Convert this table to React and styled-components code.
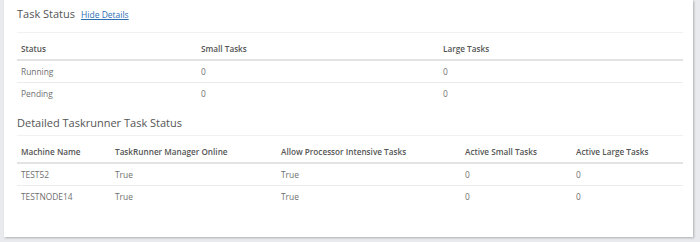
import React from "react";
import styled, { createGlobalStyle } from "styled-components";

const GlobalStyle = createGlobalStyle`
  html, body {
    margin: 0;
    padding: 0;
    background: #e8eaed;
    font-family: "Open Sans", "Noto Sans", Arial, sans-serif;
  }
`;

const Page = styled.div`
  width: 700px;
  height: 242px;
  padding: 0 7px 0 4px;
  box-sizing: border-box;
  overflow: hidden;
`;

const Card = styled.section`
  background: #fff;
  height: 237px;
  box-sizing: border-box;
  padding: 6px 10px 0 13px;
  box-shadow: 1px 1px 2px rgba(0, 0, 0, 0.25);
`;

const TitleRow = styled.div`
  display: flex;
  align-items: baseline;
  gap: 6px;
  height: 26px;
`;

const Title = styled.h2`
  margin: 0;
  font-size: 11px;
  font-weight: 400;
  color: #555;
  line-height: 15px;
`;

const SubTitle = styled(Title)`
  margin-top: 11px;
  height: 20px;
`;

const ToggleLink = styled.a`
  font-size: 8.5px;
  color: #2d6fb3;
  text-decoration: underline;
  cursor: pointer;
`;

const Table = styled.table`
  width: 100%;
  border-collapse: collapse;
  table-layout: fixed;
  font-size: 8.4px;
  line-height: 12px;
  color: #6f6f6f;
`;

const Th = styled.th`
  text-align: left;
  font-weight: 600;
  font-size: 8.2px;
  color: #555;
  padding: 10px 4px 4px;
  border-top: 1px solid #f1f1f1;
  border-bottom: 2px solid #e3e3e3;
`;

const Td = styled.td`
  padding: 5px 4px 4px;
  border-top: 1px solid #ececec;
`;

const Summary = [
  ["Running", "0", "0"],
  ["Pending", "0", "0"],
];

const Machines = [
  ["TEST52", "True", "True", "0", "0"],
  ["TESTNODE14", "True", "True", "0", "0"],
];

export default function App() {
  return (
    <>
      <GlobalStyle />
      <Page>
        <Card>
          <TitleRow>
            <Title>Task Status</Title>
            <ToggleLink>Hide Details</ToggleLink>
          </TitleRow>
          <Table>
            <colgroup>
              <col style={{ width: 180 }} />
              <col style={{ width: 242 }} />
              <col />
            </colgroup>
            <thead>
              <tr>
                <Th>Status</Th>
                <Th>Small Tasks</Th>
                <Th>Large Tasks</Th>
              </tr>
            </thead>
            <tbody>
              {Summary.map((r) => (
                <tr key={r[0]}>
                  {r.map((c, i) => (
                    <Td key={i}>{c}</Td>
                  ))}
                </tr>
              ))}
            </tbody>
          </Table>
          <SubTitle>Detailed Taskrunner Task Status</SubTitle>
          <Table>
            <colgroup>
              <col style={{ width: 94 }} />
              <col style={{ width: 166 }} />
              <col style={{ width: 184 }} />
              <col style={{ width: 111 }} />
              <col />
            </colgroup>
            <thead>
              <tr>
                <Th>Machine Name</Th>
                <Th>TaskRunner Manager Online</Th>
                <Th>Allow Processor Intensive Tasks</Th>
                <Th>Active Small Tasks</Th>
                <Th>Active Large Tasks</Th>
              </tr>
            </thead>
            <tbody>
              {Machines.map((r) => (
                <tr key={r[0]}>
                  {r.map((c, i) => (
                    <Td key={i}>{c}</Td>
                  ))}
                </tr>
              ))}
            </tbody>
          </Table>
        </Card>
      </Page>
    </>
  );
}
